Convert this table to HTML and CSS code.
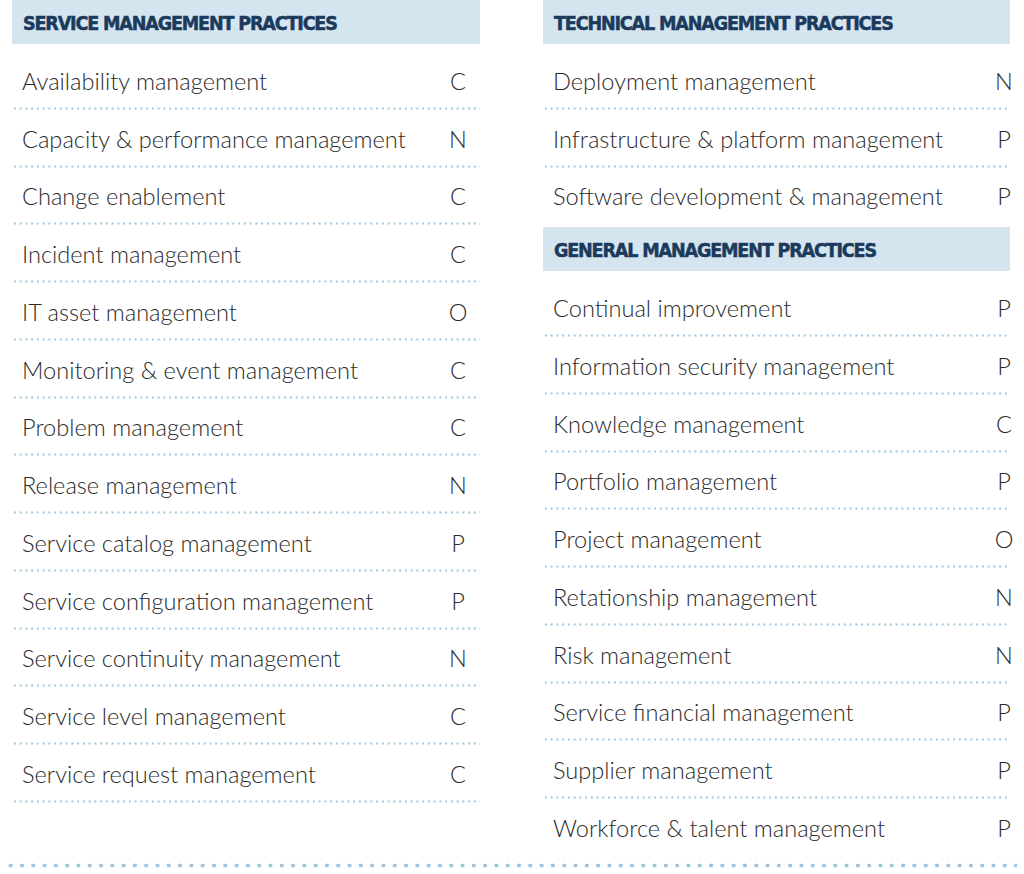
FILE: index.html
```html
<!DOCTYPE html>
<html lang="en">
<head>
<meta charset="utf-8">
<title>Management practices</title>
<link rel="stylesheet" href="styles.css">
</head>
<body>
<div class="page">
  <div class="columns">
    <div class="column column-left">
      <section class="section">
        <h2 class="band">SERVICE MANAGEMENT PRACTICES</h2>
        <div class="row"><span class="name">Availability management</span><span class="code">C</span></div>
        <div class="row"><span class="name">Capacity &amp; performance management</span><span class="code">N</span></div>
        <div class="row"><span class="name">Change enablement</span><span class="code">C</span></div>
        <div class="row"><span class="name">Incident management</span><span class="code">C</span></div>
        <div class="row"><span class="name">IT asset management</span><span class="code">O</span></div>
        <div class="row"><span class="name">Monitoring &amp; event management</span><span class="code">C</span></div>
        <div class="row"><span class="name">Problem management</span><span class="code">C</span></div>
        <div class="row"><span class="name">Release management</span><span class="code">N</span></div>
        <div class="row"><span class="name">Service catalog management</span><span class="code">P</span></div>
        <div class="row"><span class="name">Service configuration management</span><span class="code">P</span></div>
        <div class="row"><span class="name">Service continuity management</span><span class="code">N</span></div>
        <div class="row"><span class="name">Service level management</span><span class="code">C</span></div>
        <div class="row"><span class="name">Service request management</span><span class="code">C</span></div>
      </section>
    </div>
    <div class="column column-right">
      <section class="section">
        <h2 class="band">TECHNICAL MANAGEMENT PRACTICES</h2>
        <div class="row"><span class="name">Deployment management</span><span class="code">N</span></div>
        <div class="row"><span class="name">Infrastructure &amp; platform management</span><span class="code">P</span></div>
        <div class="row row-plain"><span class="name">Software development &amp; management</span><span class="code">P</span></div>
      </section>
      <section class="section section-next">
        <h2 class="band">GENERAL MANAGEMENT PRACTICES</h2>
        <div class="row"><span class="name">Continual improvement</span><span class="code">P</span></div>
        <div class="row"><span class="name">Information security management</span><span class="code">P</span></div>
        <div class="row"><span class="name">Knowledge management</span><span class="code">C</span></div>
        <div class="row"><span class="name">Portfolio management</span><span class="code">P</span></div>
        <div class="row"><span class="name">Project management</span><span class="code">O</span></div>
        <div class="row"><span class="name">Retationship management</span><span class="code">N</span></div>
        <div class="row"><span class="name">Risk management</span><span class="code">N</span></div>
        <div class="row"><span class="name">Service financial management</span><span class="code">P</span></div>
        <div class="row"><span class="name">Supplier management</span><span class="code">P</span></div>
        <div class="row row-plain"><span class="name">Workforce &amp; talent management</span><span class="code">P</span></div>
      </section>
    </div>
  </div>
  <div class="big-dots"></div>
</div>
</body>
</html>
```

FILE: styles.css
```css
html, body {
  margin: 0;
  padding: 0;
  background: #ffffff;
}

.page {
  width: 1024px;
  height: 874px;
  overflow: hidden;
  font-family: Lato, "Open Sans", sans-serif;
}

.columns {
  display: grid;
  grid-template-columns: 468px 467px;
  column-gap: 63px;
  padding-left: 12px;
  align-items: start;
}

.band {
  margin: 0 0 8px 0;
  height: 44px;
  box-sizing: border-box;
  padding: 3px 0 0 11px;
  display: flex;
  align-items: center;
  background: #d5e5f0;
  color: #1b3a5c;
  font-family: "DejaVu Sans Condensed", "DejaVu Sans", sans-serif;
  font-weight: 700;
  font-size: 19.5px;
  letter-spacing: -1.15px;
  -webkit-text-stroke: 0.5px #1b3a5c;
  white-space: nowrap;
}

.section-next {
  margin-top: 2px;
}

.row {
  height: 57.75px;
  display: flex;
  align-items: center;
  justify-content: space-between;
  padding-left: 10px;
  font-size: 23.6px;
  font-weight: 300;
  color: #2b2b2b;
  background-image: radial-gradient(circle, #a3c9de 0.9px, transparent 1.4px);
  background-size: 5.75px 3px;
  background-repeat: repeat-x;
  background-position: 0 100%;
}

.row-plain {
  background-image: none;
}

.name {
  white-space: nowrap;
}

.code {
  width: 28px;
  text-align: center;
}

.column-left .code {
  margin-right: 8px;
}

.column-right .code {
  margin-right: -8px;
}

.big-dots {
  margin: 6px 0 0 5px;
  width: 1012px;
  height: 5px;
  background-image: radial-gradient(circle, #9cc5df 1.7px, transparent 2.2px);
  background-size: 11.3px 5px;
  background-repeat: repeat-x;
}
```
